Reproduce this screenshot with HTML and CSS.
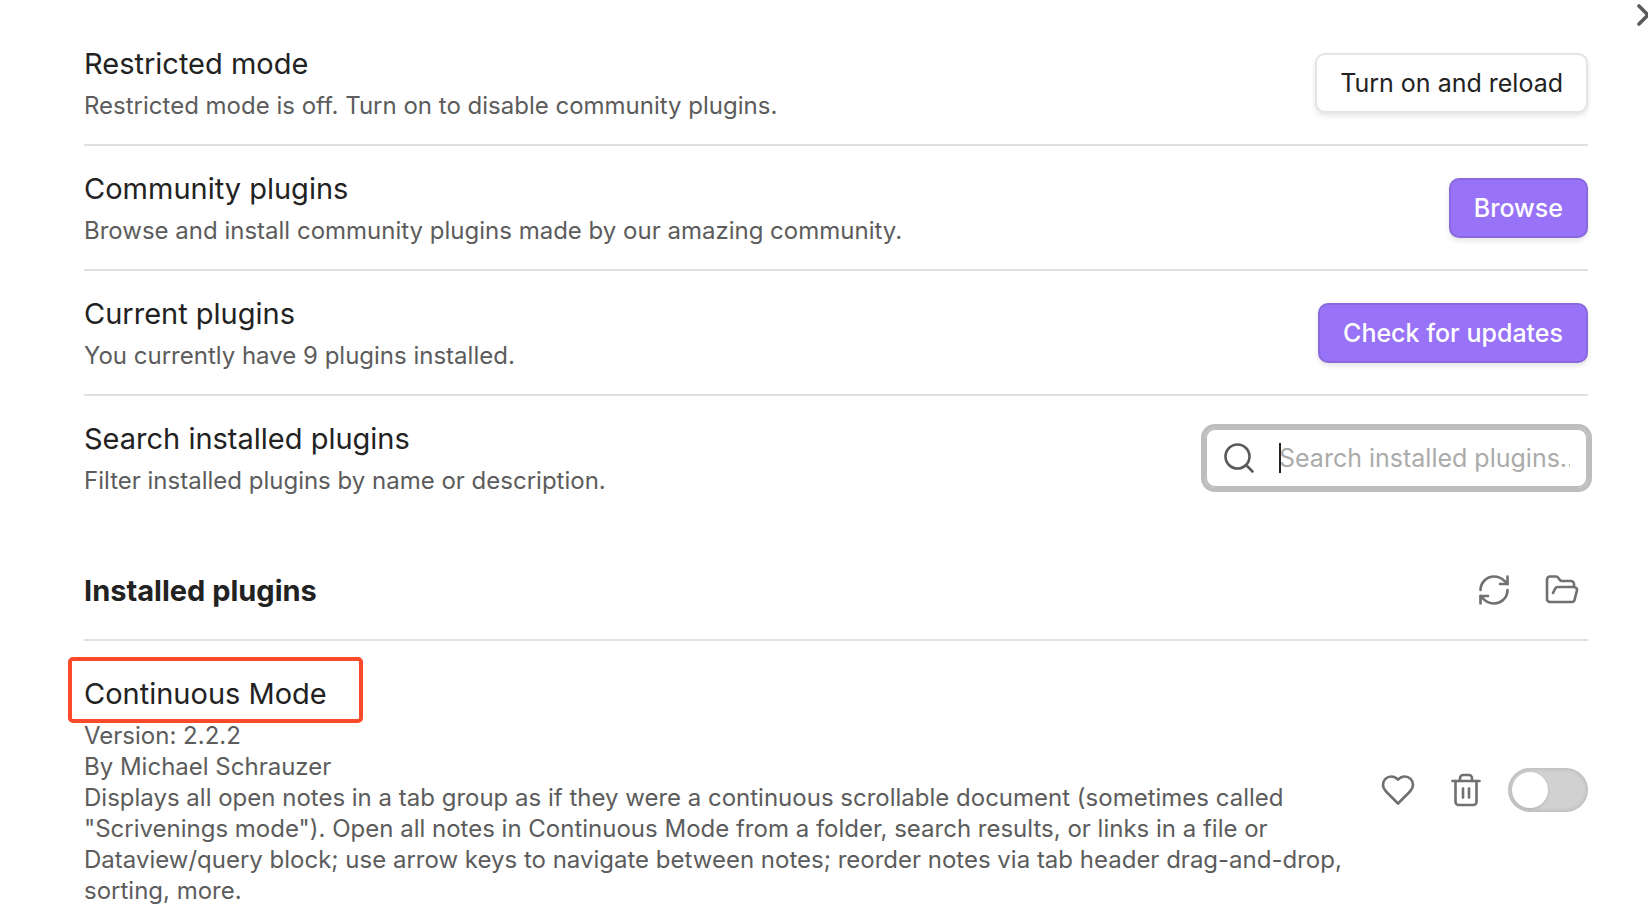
FILE: index.html
```
<!DOCTYPE html>
<html lang="en">
<head>
    <meta charset="UTF-8">
    <meta name="viewport" content="width=device-width, initial-scale=1.0">
    <title>Community plugins</title>
    <link rel="stylesheet" href="styles.css">
</head>
<body>
    <button type="button" class="close-button" aria-label="Close">
        <svg viewBox="4 4 16 16"><path d="M18 6 6 18"/><path d="m6 6 12 12"/></svg>
    </button>

    <main class="settings">
        <div class="setting-item">
            <div class="setting-info">
                <div class="setting-name">Restricted mode</div>
                <div class="setting-desc">Restricted mode is off. Turn on to disable community plugins.</div>
            </div>
            <button type="button" class="button">Turn on and reload</button>
        </div>

        <div class="setting-item">
            <div class="setting-info">
                <div class="setting-name">Community plugins</div>
                <div class="setting-desc">Browse and install community plugins made by our amazing community.</div>
            </div>
            <button type="button" class="button button-cta">Browse</button>
        </div>

        <div class="setting-item">
            <div class="setting-info">
                <div class="setting-name">Current plugins</div>
                <div class="setting-desc">You currently have 9 plugins installed.</div>
            </div>
            <button type="button" class="button button-cta">Check for updates</button>
        </div>

        <div class="setting-item">
            <div class="setting-info">
                <label class="setting-name" for="plugin-search">Search installed plugins</label>
                <div class="setting-desc">Filter installed plugins by name or description.</div>
            </div>
            <div class="search-box">
                <svg class="icon" viewBox="0 0 24 24"><circle cx="11" cy="11" r="8"/><path d="m21 21-4.3-4.3"/></svg>
                <div class="search-field">
                    <input type="text" id="plugin-search" placeholder="Search installed plugins...">
                    <span class="caret"></span>
                </div>
            </div>
        </div>

        <div class="setting-heading">
            <h2 class="setting-name">Installed plugins</h2>
            <div class="controls">
                <button type="button" class="icon-button" aria-label="Reload plugins">
                    <svg class="icon" viewBox="0 0 24 24"><path d="M3 12a9 9 0 0 1 9-9 9.75 9.75 0 0 1 6.74 2.74L21 8"/><path d="M21 3v5h-5"/><path d="M21 12a9 9 0 0 1-9 9 9.75 9.75 0 0 1-6.74-2.74L3 16"/><path d="M8 16H3v5"/></svg>
                </button>
                <button type="button" class="icon-button" aria-label="Open plugins folder">
                    <svg class="icon" viewBox="0 0 24 24"><path d="m6 14 1.45-2.9A2 2 0 0 1 9.24 10H20a2 2 0 0 1 1.94 2.5l-1.55 6a2 2 0 0 1-1.94 1.5H4a2 2 0 0 1-2-2V5c0-1.1.9-2 2-2h3.93a2 2 0 0 1 1.66.9l.82 1.2a2 2 0 0 0 1.66.9H18a2 2 0 0 1 2 2v2"/></svg>
                </button>
            </div>
        </div>

        <div class="setting-item plugin">
            <div class="setting-info">
                <label class="setting-name highlight" for="continuous-mode">Continuous Mode</label>
                <div class="setting-desc">
                    <div>Version: 2.2.2</div>
                    <div>By Michael Schrauzer</div>
                    <div>Displays all open notes in a tab group as if they were a continuous scrollable document (sometimes called "Scrivenings mode"). Open all notes in Continuous Mode from a folder, search results, or links in a file or Dataview/query block; use arrow keys to navigate between notes; reorder notes via tab header drag-and-drop, sorting, more.</div>
                </div>
            </div>
            <div class="controls">
                <button type="button" class="icon-button" aria-label="Donate">
                    <svg class="icon" viewBox="0 0 24 24"><path d="M19 14c1.49-1.46 3-3.21 3-5.5A5.5 5.5 0 0 0 16.5 3c-1.76 0-3 .5-4.5 2-1.5-1.5-2.74-2-4.5-2A5.5 5.5 0 0 0 2 8.5c0 2.3 1.5 4.05 3 5.5l7 7Z"/></svg>
                </button>
                <button type="button" class="icon-button" aria-label="Uninstall">
                    <svg class="icon" viewBox="0 0 24 24"><path d="M3 6h18"/><path d="M19 6v14c0 1-1 2-2 2H7c-1 0-2-1-2-2V6"/><path d="M8 6V4c0-1 1-2 2-2h4c1 0 2 1 2 2v2"/><path d="M10 11v6"/><path d="M14 11v6"/></svg>
                </button>
                <input type="checkbox" class="toggle" id="continuous-mode">
            </div>
        </div>
    </main>
</body>
</html>
```
FILE: styles.css
```
*, *::before { box-sizing: border-box; }

body {
    position: relative;
    margin: 0;
    overflow-x: hidden;
    background: #fff;
    color: #222;
    font-family: Inter, "Liberation Sans", sans-serif;
}

button, input { font-family: inherit; }

svg {
    display: block;
    fill: none;
    stroke: currentColor;
    stroke-width: 1.75;
    stroke-linecap: round;
    stroke-linejoin: round;
}

.icon { width: 36px; height: 36px; flex: none; }

.close-button {
    position: absolute;
    top: 3px;
    right: -12px;
    width: 24px;
    height: 24px;
    padding: 0;
    border: 0;
    background: none;
    color: #5a5a5a;
}
.close-button svg { stroke-width: 2.4; }

.settings { padding: 21px 60px 0 84px; }

.setting-item {
    display: flex;
    align-items: center;
    gap: 24px;
    padding: 23px 0;
}
.setting-item + .setting-item,
.plugin { border-top: 2px solid #e0e0e0; }
.setting-info { flex: 1; }

.setting-name {
    display: block;
    margin: 0;
    font-size: 29px;
    font-weight: 400;
    line-height: 39px;
}
.setting-desc {
    padding-top: 7px;
    color: #5c5c5c;
    font-size: 24px;
    line-height: 31px;
}

.button {
    height: 60px;
    padding: 0 23px;
    border: 2px solid #e4e4e4;
    border-radius: 10px;
    background: #fff;
    box-shadow: 0 3px 5px rgba(0, 0, 0, 0.1);
    color: #222;
    font-size: 25px;
}
.button-cta {
    border-color: #8a68de;
    background: #9873f7;
    color: #fff;
    font-weight: 500;
}

.search-box {
    display: flex;
    align-items: center;
    gap: 22px;
    width: 383px;
    height: 60px;
    padding: 0 16px 0 14px;
    border: 2px solid #bdbdbd;
    border-radius: 10px;
    box-shadow: 0 0 0 4px #bdbdbd;
    color: #5a5a5a;
}
.search-field { position: relative; flex: 1; }
.search-field input {
    display: block;
    width: 100%;
    padding: 0;
    border: 0;
    outline: 0;
    background: none;
    font-size: 25px;
    line-height: 30px;
}
.search-field input::placeholder { color: #ababab; }
.caret {
    position: absolute;
    top: 0;
    left: 0;
    width: 2px;
    height: 30px;
    background: #222;
}

.setting-heading {
    display: flex;
    align-items: center;
    justify-content: space-between;
    padding: 45px 0 23px;
}
.setting-heading .setting-name { font-weight: 700; }

.controls { display: flex; align-items: center; gap: 16px; }
.icon-button {
    width: 52px;
    height: 52px;
    padding: 8px;
    border: 0;
    background: none;
    color: #707070;
}

.plugin { padding: 33px 0 14px; }

/* red frame around the plugin name */
.highlight { position: relative; }
.highlight::before {
    content: "";
    position: absolute;
    top: -17px;
    left: -16px;
    width: 295px;
    height: 66px;
    border: 4px solid #fa4a2a;
    border-radius: 5px;
}

.toggle {
    appearance: none;
    width: 80px;
    height: 44px;
    margin: 0;
    padding: 4px;
    border-radius: 22px;
    background: #d1d1d1;
    box-shadow: inset 0 0 4px 1px rgba(0, 0, 0, 0.12);
}
.toggle::before {
    content: "";
    display: block;
    width: 36px;
    height: 36px;
    border-radius: 50%;
    background: #fff;
    box-shadow: 0 1px 3px rgba(0, 0, 0, 0.15);
}
.toggle:checked { background: #9873f7; }
.toggle:checked::before { margin-left: 36px; }
```
